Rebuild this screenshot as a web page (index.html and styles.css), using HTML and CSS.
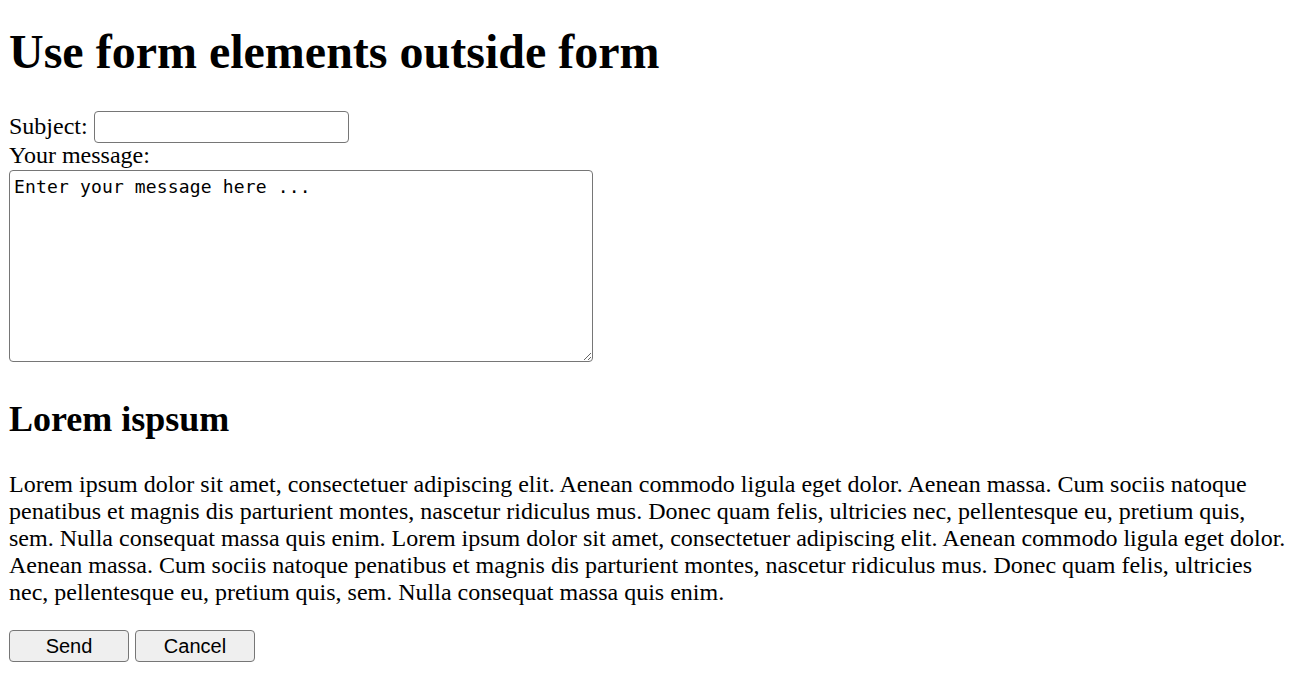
FILE: index.html
```html
<!DOCTYPE html>
<html>
<head>
<meta charset="utf-8">
<link rel="stylesheet" href="styles.css">
</head>
<body>
<h1 class="title">Use form elements outside form</h1>
<div class="field-row subject-row">
  <label class="lbl" for="subject">Subject:</label>
  <input class="subject" id="subject" type="text">
</div>
<div class="field-row">
  <label class="lbl" for="msg">Your message:</label>
</div>
<textarea class="message" id="msg">Enter your message here ...</textarea>
<h2 class="sub">Lorem ispsum</h2>
<p class="text">Lorem ipsum dolor sit amet, consectetuer adipiscing elit. Aenean commodo ligula eget dolor. Aenean massa. Cum sociis natoque penatibus et magnis dis parturient montes, nascetur ridiculus mus. Donec quam felis, ultricies nec, pellentesque eu, pretium quis, sem. Nulla consequat massa quis enim. Lorem ipsum dolor sit amet, consectetuer adipiscing elit. Aenean commodo ligula eget dolor. Aenean massa. Cum sociis natoque penatibus et magnis dis parturient montes, nascetur ridiculus mus. Donec quam felis, ultricies nec, pellentesque eu, pretium quis, sem. Nulla consequat massa quis enim.</p>
<div class="actions">
  <button class="btn" type="button">Send</button>
  <button class="btn" type="button">Cancel</button>
</div>
</body>
</html>
```
FILE: styles.css
```css
html, body {
  background: #fff;
}
body {
  margin: 0;
  padding: 0 9px;
  font-family: "Liberation Serif", "Times New Roman", serif;
  font-size: 24px;
  line-height: 27px;
  color: #000;
}
.title {
  font-size: 48px;
  line-height: 55px;
  font-weight: bold;
  margin: 24px 0 32px;
}
.field-row {
  display: flex;
  align-items: flex-start;
  gap: 6px;
  height: 27px;
}
.subject-row {
  height: 31px;
}
.subject-row .lbl {
  padding-top: 2px;
}
.lbl {
  display: block;
}
.subject {
  width: 255px;
  height: 32px;
  box-sizing: border-box;
  border: 1px solid #767676;
  border-radius: 4px;
  padding: 2px 4px;
  margin: 0;
  font-size: 20px;
  background: #fff;
}
.message {
  display: block;
  width: 584px;
  height: 192px;
  box-sizing: border-box;
  border: 1px solid #767676;
  border-radius: 4px;
  padding: 5px 4px 2px;
  margin: 1px 0 0;
  font-family: "DejaVu Sans Mono", monospace;
  font-size: 18px;
  letter-spacing: 0.15px;
  line-height: 22px;
  resize: both;
  color: #000;
}
.sub {
  font-size: 36px;
  line-height: 41px;
  font-weight: bold;
  margin: 37px 0 31px;
}
.text {
  margin: 0 0 24px;
}
.actions {
  display: flex;
  gap: 6px;
}
.btn {
  width: 120px;
  height: 32px;
  box-sizing: border-box;
  background: #efefef;
  border: 1px solid #767676;
  border-radius: 4px;
  font-family: "Liberation Sans", Arial, sans-serif;
  font-size: 20px;
  color: #000;
  padding: 0;
}
```
